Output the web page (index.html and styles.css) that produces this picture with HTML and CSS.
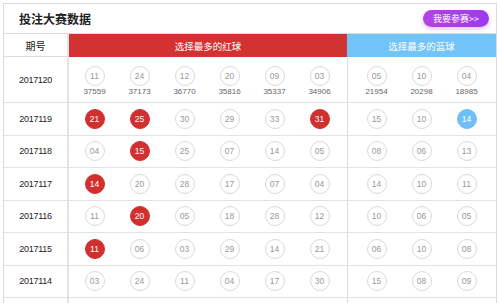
FILE: index.html
```html
<!DOCTYPE html>
<html lang="zh-CN">
<head>
<meta charset="utf-8">
<title>投注大赛数据</title>
<link rel="stylesheet" href="styles.css">
</head>
<body>
<div class="panel">
  <div class="titlebar">
    <h1 class="title">投注大赛数据</h1>
    <a class="join" href="#">我要参赛&gt;&gt;</a>
  </div>
  <div class="row head">
    <div class="period">期号</div>
    <div class="reds">选择最多的红球</div>
    <div class="blues">选择最多的蓝球</div>
  </div>
  <div class="row first">
    <div class="period">2017120</div>
    <div class="reds">
      <div class="cell"><span class="ball">11</span><span class="count">37559</span></div>
      <div class="cell"><span class="ball">24</span><span class="count">37173</span></div>
      <div class="cell"><span class="ball">12</span><span class="count">36770</span></div>
      <div class="cell"><span class="ball">20</span><span class="count">35816</span></div>
      <div class="cell"><span class="ball">09</span><span class="count">35337</span></div>
      <div class="cell"><span class="ball">03</span><span class="count">34906</span></div>
    </div>
    <div class="blues">
      <div class="cell"><span class="ball">05</span><span class="count">21954</span></div>
      <div class="cell"><span class="ball">10</span><span class="count">20298</span></div>
      <div class="cell"><span class="ball">04</span><span class="count">18985</span></div>
    </div>
  </div>
  <div class="row">
    <div class="period">2017119</div>
    <div class="reds">
      <div class="cell"><span class="ball red">21</span></div>
      <div class="cell"><span class="ball red">25</span></div>
      <div class="cell"><span class="ball">30</span></div>
      <div class="cell"><span class="ball">29</span></div>
      <div class="cell"><span class="ball">33</span></div>
      <div class="cell"><span class="ball red">31</span></div>
    </div>
    <div class="blues">
      <div class="cell"><span class="ball">15</span></div>
      <div class="cell"><span class="ball">10</span></div>
      <div class="cell"><span class="ball blue">14</span></div>
    </div>
  </div>
  <div class="row">
    <div class="period">2017118</div>
    <div class="reds">
      <div class="cell"><span class="ball">04</span></div>
      <div class="cell"><span class="ball red">15</span></div>
      <div class="cell"><span class="ball">25</span></div>
      <div class="cell"><span class="ball">07</span></div>
      <div class="cell"><span class="ball">14</span></div>
      <div class="cell"><span class="ball">05</span></div>
    </div>
    <div class="blues">
      <div class="cell"><span class="ball">08</span></div>
      <div class="cell"><span class="ball">06</span></div>
      <div class="cell"><span class="ball">13</span></div>
    </div>
  </div>
  <div class="row">
    <div class="period">2017117</div>
    <div class="reds">
      <div class="cell"><span class="ball red">14</span></div>
      <div class="cell"><span class="ball">20</span></div>
      <div class="cell"><span class="ball">28</span></div>
      <div class="cell"><span class="ball">17</span></div>
      <div class="cell"><span class="ball">07</span></div>
      <div class="cell"><span class="ball">04</span></div>
    </div>
    <div class="blues">
      <div class="cell"><span class="ball">14</span></div>
      <div class="cell"><span class="ball">10</span></div>
      <div class="cell"><span class="ball">11</span></div>
    </div>
  </div>
  <div class="row">
    <div class="period">2017116</div>
    <div class="reds">
      <div class="cell"><span class="ball">11</span></div>
      <div class="cell"><span class="ball red">20</span></div>
      <div class="cell"><span class="ball">05</span></div>
      <div class="cell"><span class="ball">18</span></div>
      <div class="cell"><span class="ball">28</span></div>
      <div class="cell"><span class="ball">12</span></div>
    </div>
    <div class="blues">
      <div class="cell"><span class="ball">10</span></div>
      <div class="cell"><span class="ball">06</span></div>
      <div class="cell"><span class="ball">05</span></div>
    </div>
  </div>
  <div class="row">
    <div class="period">2017115</div>
    <div class="reds">
      <div class="cell"><span class="ball red">11</span></div>
      <div class="cell"><span class="ball">06</span></div>
      <div class="cell"><span class="ball">03</span></div>
      <div class="cell"><span class="ball">29</span></div>
      <div class="cell"><span class="ball">14</span></div>
      <div class="cell"><span class="ball">21</span></div>
    </div>
    <div class="blues">
      <div class="cell"><span class="ball">06</span></div>
      <div class="cell"><span class="ball">10</span></div>
      <div class="cell"><span class="ball">08</span></div>
    </div>
  </div>
  <div class="row">
    <div class="period">2017114</div>
    <div class="reds">
      <div class="cell"><span class="ball">03</span></div>
      <div class="cell"><span class="ball">24</span></div>
      <div class="cell"><span class="ball">11</span></div>
      <div class="cell"><span class="ball">04</span></div>
      <div class="cell"><span class="ball">17</span></div>
      <div class="cell"><span class="ball">30</span></div>
    </div>
    <div class="blues">
      <div class="cell"><span class="ball">15</span></div>
      <div class="cell"><span class="ball">08</span></div>
      <div class="cell"><span class="ball">09</span></div>
    </div>
  </div>
  <div class="row">
    <div class="period"></div>
    <div class="reds"></div>
    <div class="blues"></div>
  </div>
</div>
</body>
</html>
```
FILE: styles.css
```css
html, body {
  overflow: hidden;
}
body {
  margin: 3px;
  background: #fff;
  font-family: "Liberation Sans", "Noto Sans CJK SC", sans-serif;
  color: #333;
}
.panel {
  width: 494px;
  box-sizing: border-box;
  border: 1px solid #dcdcdc;
  border-bottom: none;
}
.titlebar {
  height: 29px;
  border-bottom: 1px solid #dcdcdc;
  display: flex;
  align-items: center;
  justify-content: space-between;
  padding: 0 7px 0 15px;
}
.title {
  margin: 0;
  font-family: "Noto Sans CJK SC", sans-serif;
  font-size: 12px;
  font-weight: bold;
  color: #222;
  line-height: 1;
}
.join {
  display: flex;
  align-items: center;
  justify-content: center;
  width: 66px;
  height: 17px;
  margin-top: -1px;
  border-radius: 9px;
  background: linear-gradient(to right, #b443e2, #9b3bef);
  box-shadow: 0 2px 4px rgba(170, 70, 230, 0.35);
  color: #fff;
  text-decoration: none;
  font-family: "Noto Sans CJK SC", sans-serif;
  font-size: 9px;
  line-height: 1;
}
.row {
  display: grid;
  grid-template-columns: 65px 278px 1fr;
  height: 32.5px;
  box-sizing: border-box;
  border-bottom: 1px solid #e2e2e2;
}
.row.head {
  height: 23px;
  border-bottom: none;
  font-family: "Noto Sans CJK SC", sans-serif;
  font-size: 9.5px;
}
.row.first {
  height: 46px;
}
.period {
  display: flex;
  align-items: center;
  justify-content: center;
  border-right: 2px solid #e4e4e4;
  font-size: 9px;
  letter-spacing: -0.3px;
  color: #222;
}
.head .period {
  font-size: 10px;
  letter-spacing: 0;
  border-bottom: 1px solid #dcdcdc;
}
.reds {
  display: flex;
  align-items: center;
  padding: 0 3px;
}
.blues {
  display: flex;
  align-items: center;
  padding: 0 6px;
  border-left: 1px solid #dcdcdc;
}
.head .reds {
  justify-content: center;
  background: #d33232;
  color: #fff;
  padding: 0;
}
.head .blues {
  justify-content: center;
  background: #72c3f7;
  color: #fff;
  border-left: none;
  padding: 0;
}
.cell {
  width: 45px;
  display: flex;
  flex-direction: column;
  align-items: center;
}
.ball {
  width: 20px;
  height: 20px;
  box-sizing: border-box;
  border: 1px solid #d9d9d9;
  border-radius: 50%;
  display: flex;
  align-items: center;
  justify-content: center;
  font-size: 8.5px;
  color: #999;
}
.ball.red {
  background: #d22f2f;
  border-color: #d22f2f;
  color: #fff;
}
.ball.blue {
  background: #6ebff5;
  border-color: #6ebff5;
  color: #fff;
}
.first .cell {
  margin-top: 3px;
}
.count {
  margin-top: 1px;
  font-size: 8px;
  line-height: 10px;
  color: #666;
}
```
